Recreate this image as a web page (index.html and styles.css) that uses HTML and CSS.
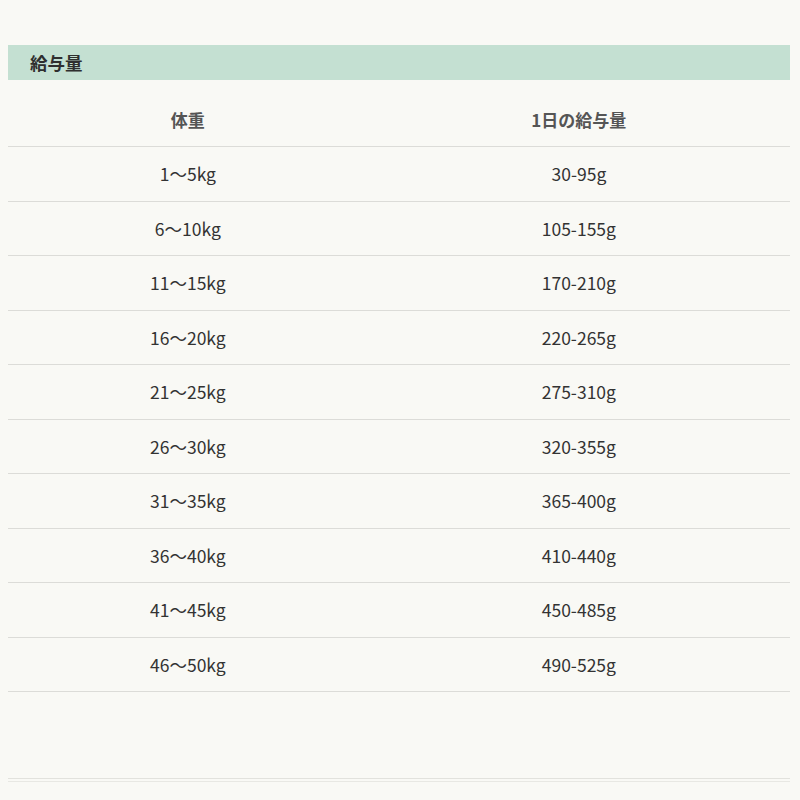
FILE: index.html
```html
<!DOCTYPE html>
<html lang="ja">
<head>
<meta charset="utf-8">
<link rel="stylesheet" href="styles.css">
</head>
<body>
<div class="page">
  <h2 class="band">給与量</h2>
  <div class="table">
    <div class="row head"><div class="cell c1">体重</div><div class="cell c2">1日の給与量</div></div>
    <div class="row"><div class="cell c1">1〜5kg</div><div class="cell c2">30-95g</div></div>
    <div class="row"><div class="cell c1">6〜10kg</div><div class="cell c2">105-155g</div></div>
    <div class="row"><div class="cell c1">11〜15kg</div><div class="cell c2">170-210g</div></div>
    <div class="row"><div class="cell c1">16〜20kg</div><div class="cell c2">220-265g</div></div>
    <div class="row"><div class="cell c1">21〜25kg</div><div class="cell c2">275-310g</div></div>
    <div class="row"><div class="cell c1">26〜30kg</div><div class="cell c2">320-355g</div></div>
    <div class="row"><div class="cell c1">31〜35kg</div><div class="cell c2">365-400g</div></div>
    <div class="row"><div class="cell c1">36〜40kg</div><div class="cell c2">410-440g</div></div>
    <div class="row"><div class="cell c1">41〜45kg</div><div class="cell c2">450-485g</div></div>
    <div class="row"><div class="cell c1">46〜50kg</div><div class="cell c2">490-525g</div></div>
  </div>
  <div class="footer-rule"></div>
</div>
</body>
</html>
```
FILE: styles.css
```css
html, body {
  margin: 0;
  padding: 0;
  background: #f9f9f5;
}
body {
  font-family: "Noto Sans CJK JP", "Noto Sans", sans-serif;
  color: #333;
}
.page {
  padding: 45px 10px 0 8px;
}
.band {
  margin: 0;
  height: 35px;
  background: #c4e0d2;
  font-size: 17.5px;
  font-weight: 700;
  line-height: 36px;
  padding-left: 22px;
  color: #2f2f2f;
}
.table {
  display: flex;
  flex-direction: column;
}
.row {
  display: grid;
  grid-template-columns: 46% 54%;
  height: 53.5px;
  border-bottom: 1px solid #dcdcd8;
  align-items: center;
}
.row.head {
  height: 66px;
}
.cell {
  text-align: center;
  font-size: 17.5px;
  color: #333;
  line-height: 1;
}
.head .cell {
  font-weight: 700;
  font-size: 17px;
  color: #555;
  padding-top: 13px;
}
.footer-rule {
  margin-top: 86px;
  height: 2px;
  border-top: 1px solid #e2e2dd;
  border-bottom: 1px solid #e8e8e3;
}
```
